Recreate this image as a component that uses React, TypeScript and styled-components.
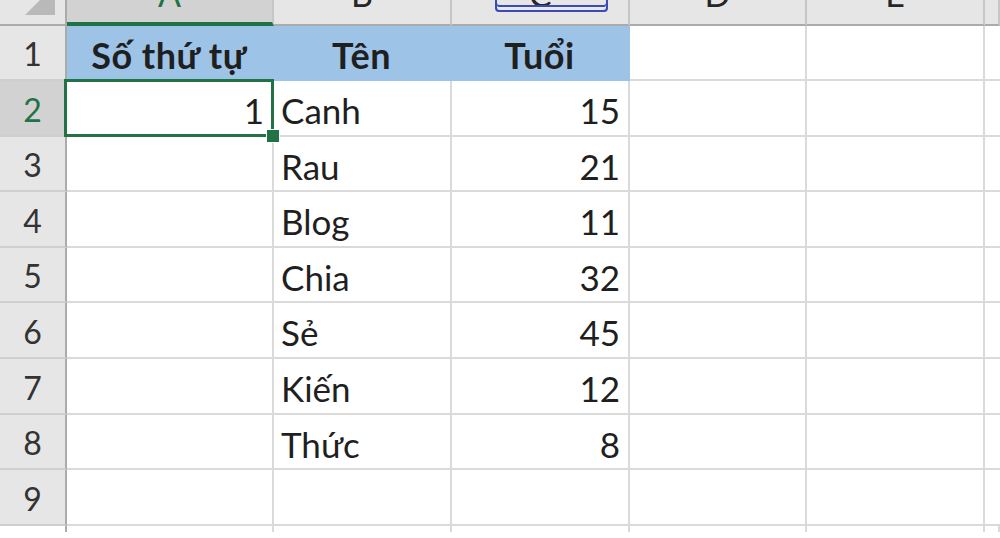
import styled, { createGlobalStyle, css } from "styled-components"

const GlobalStyle = createGlobalStyle`
    html, body {
        margin: 0;
        padding: 0;
        background: #fff;
        overflow: hidden;
    }
    body {
        font-family: Lato, "Open Sans", "Noto Sans", sans-serif;
        color: #1f1f1f;
    }
`

const COLS = "67px 207px 178px 178px 177px 178px 1fr"
const GREEN = "#217346"

const Sheet = styled.div`
    width: 1000px;
    height: 538px;
    overflow: hidden;
    background: #fff;
`

const Row = styled.div<{ $h: number }>`
    display: grid;
    grid-template-columns: ${COLS};
    height: ${p => p.$h}px;
`

const Corner = styled.div`
    background: #e6e6e6;
    border-right: 2px solid #ababab;
    border-bottom: 2px solid #ababab;
    box-sizing: border-box;
    display: flex;
    justify-content: flex-end;
    align-items: flex-end;
    padding: 0 10px 9px 0;
    overflow: hidden;
`

const ColHead = styled.div<{ $active?: boolean }>`
    position: relative;
    box-sizing: border-box;
    background: ${p => (p.$active ? "#d2d2d2" : "#e6e6e6")};
    border-right: 2px solid #c6c6c6;
    border-bottom: ${p => (p.$active ? `4px solid ${GREEN}` : "2px solid #ababab")};
    color: ${p => (p.$active ? GREEN : "#262626")};
    display: flex;
    justify-content: center;
    align-items: flex-end;
    overflow: hidden;
    font-size: 34px;
    line-height: 34px;
    padding-bottom: ${p => (p.$active ? 11 : 13)}px;
`

const EditBox = styled.div`
    position: absolute;
    left: 43px;
    width: 113px;
    top: -6px;
    height: 18px;
    border: 2px solid #3b4bb0;
    border-radius: 4px;
    box-sizing: border-box;
    box-shadow: inset 0 -3px 0 #e6e6ff, inset 0 -5px 0 #3b4bb0;
    background: transparent;
`

const RowHead = styled.div<{ $active?: boolean }>`
    box-sizing: border-box;
    background: ${p => (p.$active ? "#d2d2d2" : "#e6e6e6")};
    border-right: 2px solid #ababab;
    border-bottom: 2px solid #cfcfcf;
    color: ${p => (p.$active ? GREEN : "#333")};
    display: flex;
    align-items: center;
    justify-content: center;
    font-size: 32px;
    padding-top: 2px;
`

const Cell = styled.div<{ $align?: "left" | "right" | "center"; $head?: boolean }>`
    position: relative;
    box-sizing: border-box;
    border-right: 2px solid #dadada;
    border-bottom: 2px solid #dadada;
    display: flex;
    align-items: center;
    font-size: 35px;
    padding: 4px 8px 0 7px;
    white-space: nowrap;
    justify-content: ${p => (p.$align === "right" ? "flex-end" : p.$align === "center" ? "center" : "flex-start")};
    ${p =>
        p.$head &&
        css`
            background: #9dc3e6;
            border-color: #9dc3e6;
            font-weight: 700;
            font-size: 36px;
            letter-spacing: 0.5px;
        `}
`

const Selection = styled.div`
    position: absolute;
    z-index: 2;
    left: -3px;
    top: -2px;
    right: -2px;
    bottom: -2px;
    border: 3px solid ${GREEN};
    pointer-events: none;
`

const Handle = styled.div`
    position: absolute;
    right: -9px;
    bottom: -9px;
    width: 12px;
    height: 12px;
    background: ${GREEN};
    border: 1px solid #fff;
`

const Tail = styled.div`
    border-right: 2px solid #dadada;
`

const TailHead = styled.div`
    border-right: 2px solid #ababab;
`

const data: [string, string, string][] = [
    ["1", "Canh", "15"],
    ["", "Rau", "21"],
    ["", "Blog", "11"],
    ["", "Chia", "32"],
    ["", "Sẻ", "45"],
    ["", "Kiến", "12"],
    ["", "Thức", "8"],
    ["", "", ""],
]

const heights = [56, 55, 56, 55, 56, 56, 55, 56]

const App = () => {
    return (
        <Sheet>
            <GlobalStyle />
            <Row $h={26}>
                <Corner>
                    <svg width="30" height="30" viewBox="0 0 30 30">
                        <polygon points="30,0 30,30 0,30" fill="#b9b9b9" />
                    </svg>
                </Corner>
                <ColHead $active>A</ColHead>
                <ColHead>B</ColHead>
                <ColHead>
                    C
                    <EditBox />
                </ColHead>
                <ColHead>D</ColHead>
                <ColHead>E</ColHead>
                <ColHead />
            </Row>
            <Row $h={55}>
                <RowHead>1</RowHead>
                <Cell $head $align="center">Số thứ tự</Cell>
                <Cell $head $align="center">Tên</Cell>
                <Cell $head $align="center">Tuổi</Cell>
                <Cell />
                <Cell />
                <Cell />
            </Row>
            {data.map((r, i) => (
                <Row $h={heights[i]} key={i}>
                    <RowHead $active={i === 0}>{i + 2}</RowHead>
                    <Cell $align="right">
                        {r[0]}
                        {i === 0 && (
                            <Selection>
                                <Handle />
                            </Selection>
                        )}
                    </Cell>
                    <Cell>{r[1]}</Cell>
                    <Cell $align="right">{r[2]}</Cell>
                    <Cell />
                    <Cell />
                    <Cell />
                </Row>
            ))}
            <Row $h={6}>
                <TailHead />
                <Tail />
                <Tail />
                <Tail />
                <Tail />
                <Tail />
                <Tail />
            </Row>
        </Sheet>
    )
}

export default App
